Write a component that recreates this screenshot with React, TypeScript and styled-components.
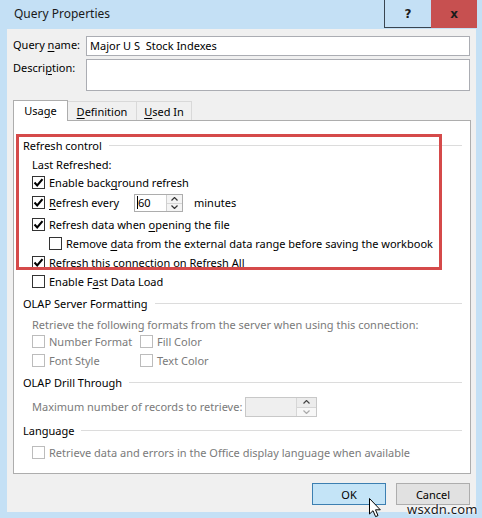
import React from "react";
import styled, { createGlobalStyle } from "styled-components";

const Global = createGlobalStyle`
  html, body { margin: 0; padding: 0; }
  body { font-family: "Noto Sans", "Segoe UI", sans-serif; font-size: 11px; color: #000; }
`;

const Window = styled.div`
  position: relative;
  width: 482px;
  height: 518px;
  background: #c4e0f5;
  display: flex;
  flex-direction: column;
  overflow: hidden;
`;

const TitleBar = styled.div`
  height: 29px;
  flex-shrink: 0;
  display: flex;
  align-items: flex-start;
  padding-right: 5px;
`;

const Title = styled.div`
  flex: 1;
  padding-left: 14px;
  line-height: 28px;
  font-size: 12px;
  color: #1a1a1a;
`;

const CaptionButton = styled.div<{ $close?: boolean }>`
  box-sizing: border-box;
  width: ${(p) => (p.$close ? 46 : 47)}px;
  height: 28px;
  display: flex;
  align-items: center;
  justify-content: center;
  font-family: "DejaVu Sans", sans-serif;
  font-weight: bold;
  font-size: 12px;
  color: #1b1b1b;
  background: ${(p) => (p.$close ? "#c75050" : "transparent")};
  border-left: ${(p) => (p.$close ? "none" : "1px solid #3a4550")};
  border-bottom: ${(p) => (p.$close ? "none" : "1px solid #3a4550")};
`;

const Client = styled.div`
  flex: 1;
  margin: 0 6px 6px 7px;
  background: #f0f0f0;
  padding: 7px 5px 0 6px;
  display: flex;
  flex-direction: column;
`;

const FieldGrid = styled.div`
  display: grid;
  grid-template-columns: 73px 1fr;
  row-gap: 3px;
  margin-right: 1px;
`;

const FieldLabel = styled.div`
  line-height: 18px;
  font-size: 11px;
`;

const TextBox = styled.div<{ $h: number }>`
  box-sizing: border-box;
  height: ${(p) => p.$h}px;
  border: 1px solid #abadb3;
  background: #fff;
  padding-left: 3px;
  line-height: 18px;
`;

const U = styled.span`
  text-decoration: underline;
  text-underline-offset: 2px;
`;

const Text = styled.span`
  white-space: pre;
`;

const TabBar = styled.div`
  margin-top: 9px;
  height: 20px;
  display: flex;
  align-items: flex-end;
`;

const Tab = styled.div<{ $w: number; $active?: boolean }>`
  box-sizing: border-box;
  width: ${(p) => p.$w}px;
  height: ${(p) => (p.$active ? 21 : 19)}px;
  margin-bottom: ${(p) => (p.$active ? -1 : 0)}px;
  position: relative;
  z-index: ${(p) => (p.$active ? 2 : 1)};
  background: ${(p) => (p.$active ? "#fff" : "#f0f0f0")};
  border: 1px solid ${(p) => (p.$active ? "#adadad" : "#d9d9d9")};
  border-bottom: none;
  margin-left: ${(p) => (p.$active ? 0 : -1)}px;
  display: flex;
  align-items: center;
  justify-content: center;
  padding-bottom: ${(p) => (p.$active ? 2 : 0)}px;
`;

const Panel = styled.div`
  position: relative;
  box-sizing: border-box;
  height: 354px;
  background: #fff;
  border: 1px solid #adadad;
  padding: 14px 8px 0 9px;
  display: flex;
  flex-direction: column;
`;

const Highlight = styled.div`
  position: absolute;
  left: 2px;
  top: 13px;
  width: 426px;
  height: 136px;
  box-sizing: border-box;
  border: 3px solid #d54a4a;
  pointer-events: none;
`;

const Row = styled.div<{ $h: number; $indent?: number; $disabled?: boolean }>`
  height: ${(p) => p.$h}px;
  display: flex;
  align-items: center;
  padding-left: ${(p) => p.$indent ?? 0}px;
  color: ${(p) => (p.$disabled ? "#7a7a7a" : "#000")};
  white-space: nowrap;
`;

const SectionLine = styled.div`
  flex: 1;
  height: 1px;
  background: #dcdcdc;
  margin-left: 7px;
`;

const Box = styled.span<{ $disabled?: boolean }>`
  box-sizing: border-box;
  width: 13px;
  height: 13px;
  flex-shrink: 0;
  border: 1px solid ${(p) => (p.$disabled ? "#bcbcbc" : "#333")};
  background: #fff;
  margin-right: 4px;
  display: flex;
  align-items: center;
  justify-content: center;
`;

const TwoCols = styled.div`
  display: grid;
  grid-template-columns: 108px auto;
  align-items: center;
`;

const Inline = styled.div`
  display: flex;
  align-items: center;
`;

const FixedLabel = styled.span<{ $w: number }>`
  width: ${(p) => p.$w}px;
  flex-shrink: 0;
`;

const Spin = styled.div<{ $w: number; $bw: number; $disabled?: boolean }>`
  box-sizing: border-box;
  width: ${(p) => p.$w}px;
  height: ${(p) => (p.$disabled ? 20 : 18)}px;
  border: 1px solid ${(p) => (p.$disabled ? "#c8c8c8" : "#adadad")};
  background: ${(p) => (p.$disabled ? "#efefef" : "#fff")};
  display: grid;
  grid-template-columns: 1fr ${(p) => p.$bw}px;
`;

const SpinText = styled.div`
  display: flex;
  align-items: center;
  padding-left: 2px;
  color: #000;
`;

const Caret = styled.span`
  width: 1px;
  height: 13px;
  background: #000;
`;

const SpinButtons = styled.div<{ $disabled?: boolean }>`
  display: grid;
  grid-template-rows: 1fr 1fr;
  border-left: 1px solid ${(p) => (p.$disabled ? "#d6d6d6" : "#cfcfcf")};
  background: ${(p) => (p.$disabled ? "#ececec" : "#f4f4f4")};
`;

const SpinHalf = styled.div<{ $bottom?: boolean; $disabled?: boolean }>`
  display: flex;
  align-items: center;
  justify-content: center;
  border-top: ${(p) => (p.$bottom ? "1px solid #d6d6d6" : "none")};
  background: ${(p) => (p.$bottom && p.$disabled ? "#f7f7f7" : "transparent")};
`;

const Units = styled.span`
  margin-left: 11px;
`;

const ButtonRow = styled.div`
  margin-top: 9px;
  display: flex;
  justify-content: flex-end;
  gap: 10px;
  padding-right: 1px;
`;

const DlgButton = styled.div<{ $default?: boolean }>`
  box-sizing: border-box;
  width: 74px;
  height: 22px;
  display: flex;
  align-items: center;
  justify-content: center;
  background: ${(p) => (p.$default ? "#c4e4f7" : "#e1e1e1")};
  border: 1px solid ${(p) => (p.$default ? "#3c7fb1" : "#adadad")};
  font-size: 11px;
`;

const Cursor = styled.svg`
  position: absolute;
  left: 368px;
  top: 497px;
`;

const Watermark = styled.div`
  position: absolute;
  left: 407px;
  top: 500px;
  font-size: 13px;
  color: #1a1a1a;
  text-shadow: 0 0 2px #fff, 0 0 2px #fff;
  letter-spacing: 0.2px;
`;

const Check = ({ checked, disabled }: { checked?: boolean; disabled?: boolean }) => (
  <Box $disabled={disabled}>
    {checked && (
      <svg width="11" height="11" viewBox="0 0 11 11">
        <path d="M1.5 5.5 L4.2 8.4 L9.5 2.1" fill="none" stroke="#000" strokeWidth="2.1" />
      </svg>
    )}
  </Box>
);

const Arrow = ({ up, color }: { up?: boolean; color: string }) => (
  <svg width="7" height="4" viewBox="0 0 7 4">
    <path d={up ? "M0.5 3.5 L3.5 0.5 L6.5 3.5" : "M0.5 0.5 L3.5 3.5 L6.5 0.5"} fill="none" stroke={color} strokeWidth="1.2" />
  </svg>
);

const Section = ({ title }: { title: string }) => (
  <>
    <Text>{title}</Text>
    <SectionLine />
  </>
);

export default function App() {
  return (
    <Window>
      <Global />
      <TitleBar>
        <Title>Query Properties</Title>
        <CaptionButton>?</CaptionButton>
        <CaptionButton $close>x</CaptionButton>
      </TitleBar>
      <Client>
        <FieldGrid>
          <FieldLabel>
            Query <U>n</U>ame:
          </FieldLabel>
          <TextBox $h={20}>Major U S&nbsp; Stock Indexes</TextBox>
          <FieldLabel>
            Descri<U>p</U>tion:
          </FieldLabel>
          <TextBox $h={32} />
        </FieldGrid>
        <TabBar>
          <Tab $w={55} $active>
            <Text>
              Usa<U>g</U>e
            </Text>
          </Tab>
          <Tab $w={70}>
            <Text>
              <U>D</U>efinition
            </Text>
          </Tab>
          <Tab $w={56}>
            <Text>
              <U>U</U>sed In
            </Text>
          </Tab>
        </TabBar>
        <Panel>
          <Row $h={20}>
            <Section title="Refresh control" />
          </Row>
          <Row $h={19} $indent={9}>
            <Text>Last Refreshed:</Text>
          </Row>
          <Row $h={17} $indent={9}>
            <Check checked />
            <Text>
              Enable back<U>g</U>round refresh
            </Text>
          </Row>
          <Row $h={23} $indent={9}>
            <Check checked />
            <FixedLabel $w={85}>
              <U>R</U>efresh every
            </FixedLabel>
            <Spin $w={49} $bw={16}>
              <SpinText>
                <Caret />
                60
              </SpinText>
              <SpinButtons>
                <SpinHalf>
                  <Arrow up color="#333" />
                </SpinHalf>
                <SpinHalf $bottom>
                  <Arrow color="#333" />
                </SpinHalf>
              </SpinButtons>
            </Spin>
            <Units>minutes</Units>
          </Row>
          <Row $h={20} $indent={9}>
            <Check checked />
            <Text>
              Refresh data when <U>o</U>pening the file
            </Text>
          </Row>
          <Row $h={19} $indent={26}>
            <Check />
            <Text>
              Remove <U>d</U>ata from the external data range before saving the workbook
            </Text>
          </Row>
          <Row $h={19} $indent={9}>
            <Check checked />
            <Text>
              Refresh this connection on Refresh <U>A</U>ll
            </Text>
          </Row>
          <Row $h={19} $indent={9}>
            <Check />
            <Text>
              Enable F<U>a</U>st Data Load
            </Text>
          </Row>
          <Row $h={24}>
            <Section title="OLAP Server Formatting" />
          </Row>
          <Row $h={18} $indent={9} $disabled>
            <Text>Retrieve the following formats from the server when using this connection:</Text>
          </Row>
          <Row $h={17} $indent={9} $disabled>
            <TwoCols>
              <Inline>
                <Check disabled />
                <Text>Number Format</Text>
              </Inline>
              <Inline>
                <Check disabled />
                <Text>Fill Color</Text>
              </Inline>
            </TwoCols>
          </Row>
          <Row $h={20} $indent={9} $disabled>
            <TwoCols>
              <Inline>
                <Check disabled />
                <Text>Font Style</Text>
              </Inline>
              <Inline>
                <Check disabled />
                <Text>Text Color</Text>
              </Inline>
            </TwoCols>
          </Row>
          <Row $h={25}>
            <Section title="OLAP Drill Through" />
          </Row>
          <Row $h={23} $indent={9} $disabled>
            <FixedLabel $w={213}>Maximum number of records to retrieve:</FixedLabel>
            <Spin $w={72} $bw={20} $disabled>
              <SpinText />
              <SpinButtons $disabled>
                <SpinHalf>
                  <Arrow up color="#444" />
                </SpinHalf>
                <SpinHalf $bottom $disabled>
                  <Arrow color="#aaa" />
                </SpinHalf>
              </SpinButtons>
            </Spin>
          </Row>
          <Row $h={24}>
            <Section title="Language" />
          </Row>
          <Row $h={20} $indent={9} $disabled>
            <Check disabled />
            <Text>Retrieve data and errors in the Office display language when available</Text>
          </Row>
          <Highlight />
        </Panel>
        <ButtonRow>
          <DlgButton $default>OK</DlgButton>
          <DlgButton>Cancel</DlgButton>
        </ButtonRow>
      </Client>
      <Watermark>wsxdn.com</Watermark>
      <Cursor width="14" height="21" viewBox="0 0 14 21">
        <path d="M1.5 1.5 L1.5 17 L5 13.7 L7.6 19.6 L10 18.6 L7.5 12.8 L12.3 12.8 Z" fill="#fff" stroke="#000" strokeWidth="1" strokeLinejoin="round" />
      </Cursor>
    </Window>
  );
}
